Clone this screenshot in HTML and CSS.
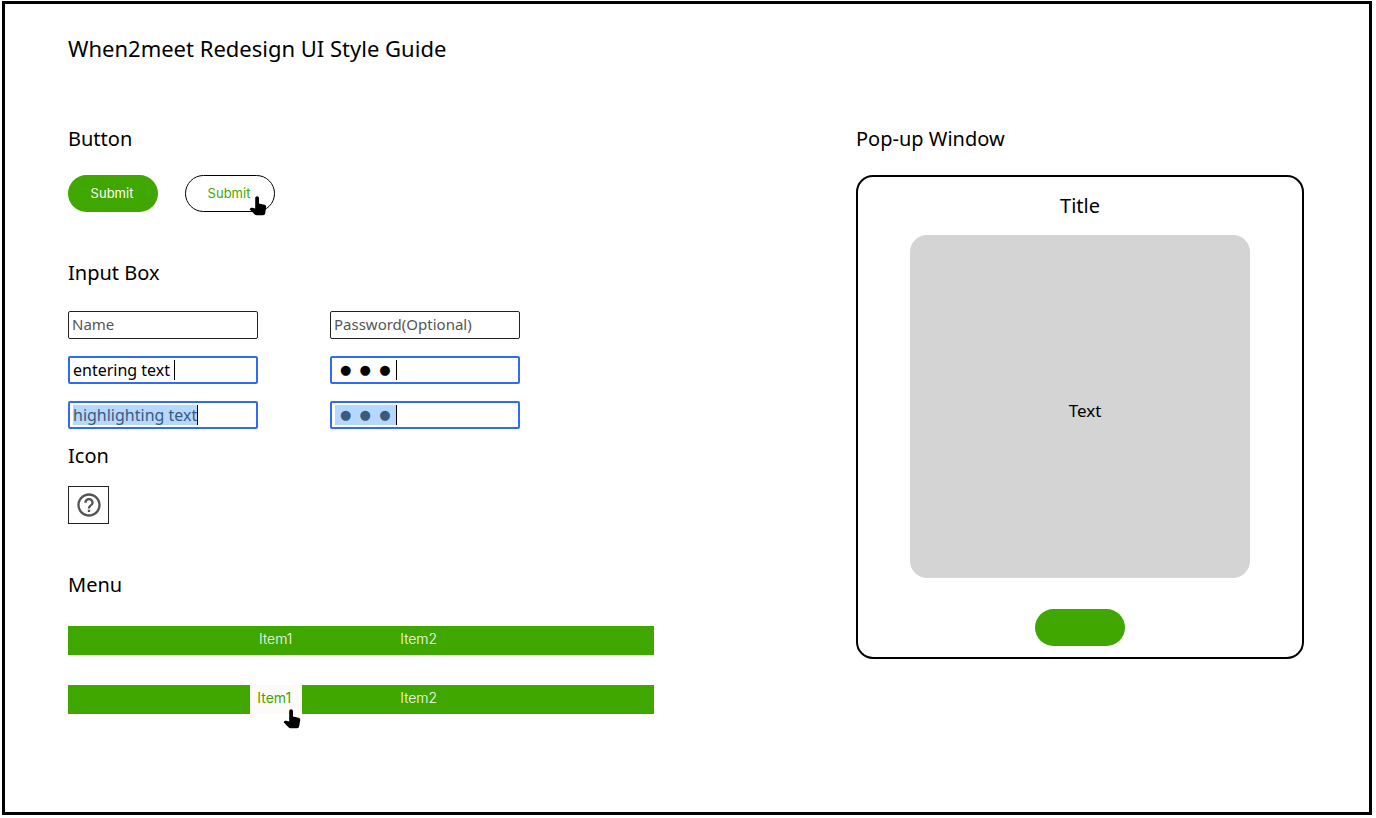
FILE: index.html
```html
<!DOCTYPE html>
<html lang="en">
<head>
<meta charset="utf-8">
<meta name="viewport" content="width=device-width, initial-scale=1">
<title>When2meet Redesign UI Style Guide</title>
<link rel="stylesheet" href="styles.css">
</head>
<body>
<svg class="defs" aria-hidden="true">
  <symbol id="hand" viewBox="0 0 18 20">
    <path d="M6.2 2.2C6.2.9 7.1.2 8.1.2s1.9.7 1.9 2v5.3l5.4 1.2c1.2.3 1.9 1 1.800 2.200l-1 6.200c-.2 1.400-.9 2.200-2.200 2.200H7.600c-.8 0-1.300-.2-1.900-.8L.6 13.200l.8-.9c.5-.5 1-.6 1.700-.5l3.100.7z"/>
  </symbol>
</svg>
<main class="frame">
  <h1 class="title">When2meet Redesign UI Style Guide</h1>
  <div class="columns">
    <div class="components">
      <section class="group">
        <h2 class="heading">Button</h2>
        <div class="buttons">
          <button class="pill" type="button">Submit</button>
          <div class="hovered">
            <button class="pill pill-outline" type="button">Submit</button>
            <svg class="hand hand-button" aria-hidden="true"><use href="#hand"/></svg>
          </div>
        </div>
      </section>

      <section class="group group-inputs">
        <h2 class="heading">Input Box</h2>
        <div class="fields">
          <label class="field"><input class="entry entry-wide" type="text" placeholder="Name" aria-label="Name"></label>
          <label class="field"><input class="entry entry-wide" type="text" placeholder="Password(Optional)" aria-label="Password"></label>
          <label class="field field-active"><input class="entry" type="text" value="entering text" aria-label="Name, entering"><span class="caret caret-spaced"></span></label>
          <label class="field field-active"><input class="entry entry-dots" type="text" value="●  ●  ●" aria-label="Password, entering"><span class="caret"></span></label>
          <label class="field field-active"><input class="entry entry-selected" type="text" value="highlighting text" aria-label="Name, highlighted"><span class="caret"></span></label>
          <label class="field field-active"><input class="entry entry-dots entry-selected" type="text" value="●  ●  ●" aria-label="Password, highlighted"><span class="caret"></span></label>
        </div>
      </section>

      <section class="group group-icon">
        <h2 class="heading">Icon</h2>
        <button class="icon-button" type="button" aria-label="Help">
          <svg class="help" viewBox="0 0 24 24" aria-hidden="true"><path d="M11 18h2v-2h-2v2zm1-16C6.480 2 2 6.480 2 12s4.480 10 10 10 10-4.480 10-10S17.520 2 12 2zm0 18c-4.410 0-8-3.590-8-8s3.590-8 8-8 8 3.590 8 8-3.590 8-8 8zm0-14c-2.210 0-4 1.790-4 4h2c0-1.100.9-2 2-2s2 .9 2 2c0 2-3 1.750-3 5h2c0-2.250 3-2.500 3-5 0-2.210-1.790-4-4-4z"/></svg>
        </button>
      </section>

      <section class="group group-menu">
        <h2 class="heading">Menu</h2>
        <div class="menus">
          <nav class="menu" aria-label="Menu">
            <a class="item" href="#item1">Item1</a>
            <a class="item" href="#item2">Item2</a>
          </nav>
          <nav class="menu" aria-label="Menu, hovered">
            <a class="item item-hover" href="#item1">Item1<svg class="hand hand-menu" aria-hidden="true"><use href="#hand"/></svg></a>
            <a class="item" href="#item2">Item2</a>
          </nav>
        </div>
      </section>
    </div>

    <section class="popup-group">
      <h2 class="heading">Pop-up Window</h2>
      <div class="popup">
        <h3 class="popup-title">Title</h3>
        <div class="popup-body">Text</div>
        <button class="pill" type="button" aria-label="Confirm"></button>
      </div>
    </section>
  </div>
</main>
</body>
</html>
```
FILE: styles.css
```css
:root {
  --green: #3fa700;
  --blue: #2f6cf6;
}

* {
  box-sizing: border-box;
}

body {
  margin: 0;
  padding: 1px 4px 3px 2px;
  min-height: 100vh;
  display: flex;
  background: #fff;
  color: #000;
  font-family: "Noto Sans", sans-serif;
}

.defs {
  position: absolute;
  width: 0;
  height: 0;
}

.frame {
  flex: 1;
  padding: 30px 65px 32px 63px;
  border: 3px solid #000;
}

.title,
.heading,
.popup-title {
  margin: 0;
  font-weight: 400;
  line-height: 28px;
}

.title {
  margin-bottom: 63px;
  font-size: 22px;
}

.heading,
.popup-title {
  font-size: 20px;
}

.columns {
  display: grid;
  grid-template-columns: 788fr 448fr;
  align-items: start;
}

.group {
  display: flex;
  flex-direction: column;
  align-items: flex-start;
  gap: 22px;
}

.group-inputs {
  margin-top: 47px;
  gap: 24px;
}

.group-icon {
  margin-top: 13px;
  gap: 16px;
}

.group-menu {
  margin-top: 47px;
  gap: 27px;
}

.buttons {
  display: flex;
  gap: 27px;
}

.hovered {
  position: relative;
}

.pill {
  display: block;
  width: 90px;
  height: 37px;
  padding: 0 2px 2px 0;
  border: 0;
  border-radius: 19px;
  background: var(--green);
  color: #fff;
  font: 400 13px "Inter", sans-serif;
}

.pill-outline {
  border: 1px solid #000;
  background: #fff;
  color: var(--green);
}

.hand {
  position: absolute;
  width: 18px;
  height: 20px;
  fill: #000;
}

.hand-button {
  right: 8px;
  bottom: -4px;
}

.hand-menu {
  right: 1px;
  bottom: -15px;
}

.fields {
  display: grid;
  grid-template-columns: 190px 190px;
  gap: 17px 72px;
}

.field {
  display: flex;
  align-items: center;
  height: 28px;
  padding: 0 3px;
  border: 1px solid #222;
  border-radius: 2px;
}

.field-active {
  border: 2px solid var(--blue);
}

.entry {
  field-sizing: content;
  height: 20px;
  padding: 0;
  border: 0;
  outline: 0;
  background: none;
  color: #000;
  font: 16px "Noto Sans", sans-serif;
}

.entry-wide {
  width: 100%;
  padding-bottom: 2px;
  font-size: 15px;
}

.entry::placeholder {
  color: #555;
  opacity: 1;
}

.entry-dots {
  padding: 0 5px 2px;
  font: 13px "DejaVu Sans", sans-serif;
}

.entry-selected {
  background: #b4d8ff;
  color: #3c5a7c;
}

.caret {
  width: 1px;
  height: 20px;
  background: #000;
}

.caret-spaced {
  margin-left: 4px;
}

.icon-button {
  display: grid;
  place-items: center;
  width: 41px;
  height: 38px;
  padding: 0;
  border: 1px solid #222;
  background: #fff;
}

.help {
  width: 28px;
  height: 28px;
  fill: #555;
}

.menus {
  display: grid;
  gap: 30px;
  width: 74.4%;
}

.menu {
  display: flex;
  gap: 91px;
  height: 29px;
  padding-left: 31%;
  background: var(--green);
}

.item {
  position: relative;
  width: 52px;
  color: #fff;
  font: 300 14px/26px "Inter", sans-serif;
  text-align: center;
  text-decoration: none;
}

.item-hover {
  padding-right: 3px;
  background: #fffafa;
  color: var(--green);
  font-weight: 400;
}

.popup-group {
  display: grid;
  gap: 22px;
}

.popup {
  display: flex;
  flex-direction: column;
  align-items: center;
  padding: 15px 52px 11px;
  border: 2px solid #000;
  border-radius: 17px;
}

.popup-title {
  margin-bottom: 15px;
}

.popup-body {
  display: grid;
  place-items: center;
  width: 100%;
  height: 343px;
  margin-bottom: 31px;
  padding: 8px 0 0 10px;
  border-radius: 17px;
  background: #d4d4d4;
  font-size: 17px;
}
```
